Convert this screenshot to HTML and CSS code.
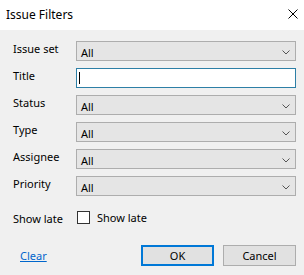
FILE: index.html
```html
<!DOCTYPE html>
<html lang="en">
  <head>
    <meta charset="UTF-8" />
    <meta name="viewport" content="width=device-width, initial-scale=1.0" />
    <title>Issue Filters</title>
    <link rel="stylesheet" href="styles.css">
  </head>
  <body>
    <div class="dialog">
      <div class="titlebar">
        <span class="caption">Issue Filters</span>
        <svg class="close" width="10" height="10" viewBox="0 0 10 10">
          <path d="M0.5 0.5 L9.5 9.5 M9.5 0.5 L0.5 9.5" stroke="#000" stroke-width="1" fill="none" />
        </svg>
      </div>
      <div class="content">
        <div class="form">
          <span class="lbl">Issue set</span>
          <div class="combo"><span>All</span><svg class="chev" width="8" height="5" viewBox="0 0 8 5"><path d="M0.5 0.5 L4 4 L7.5 0.5" stroke="#555" fill="none" /></svg></div>

          <span class="lbl">Title</span>
          <div class="textbox"><span class="caret"></span></div>

          <span class="lbl">Status</span>
          <div class="combo"><span>All</span><svg class="chev" width="8" height="5" viewBox="0 0 8 5"><path d="M0.5 0.5 L4 4 L7.5 0.5" stroke="#555" fill="none" /></svg></div>

          <span class="lbl">Type</span>
          <div class="combo"><span>All</span><svg class="chev" width="8" height="5" viewBox="0 0 8 5"><path d="M0.5 0.5 L4 4 L7.5 0.5" stroke="#555" fill="none" /></svg></div>

          <span class="lbl">Assignee</span>
          <div class="combo"><span>All</span><svg class="chev" width="8" height="5" viewBox="0 0 8 5"><path d="M0.5 0.5 L4 4 L7.5 0.5" stroke="#555" fill="none" /></svg></div>

          <span class="lbl">Priority</span>
          <div class="combo"><span>All</span><svg class="chev" width="8" height="5" viewBox="0 0 8 5"><path d="M0.5 0.5 L4 4 L7.5 0.5" stroke="#555" fill="none" /></svg></div>

          <span class="lbl late">Show late</span>
          <div class="check late"><span class="box"></span><span>Show late</span></div>
        </div>
        <div class="footer">
          <a class="clear" href="#">Clear</a>
          <div class="buttons">
            <button class="btn default">OK</button>
            <button class="btn">Cancel</button>
          </div>
        </div>
      </div>
    </div>
  </body>
</html>
```

FILE: styles.css
```css
body {
  margin: 0;
  padding: 0;
  font-family: "Noto Sans", "Open Sans", sans-serif;
  font-size: 11px;
  color: #000;
}

.dialog {
  width: 304px;
  height: 275px;
  background-color: #f0f0f0;
  display: flex;
  flex-direction: column;
}

.titlebar {
  height: 30px;
  background-color: #ffffff;
  display: flex;
  align-items: center;
  justify-content: space-between;
  padding: 0 6px 0 6px;
  box-sizing: border-box;
}

.caption {
  font-size: 12px;
  margin-top: -2px;
}

.close {
  margin-top: -2px;
}

.content {
  flex: 1;
  padding: 11px 8px 0 13px;
}

.form {
  display: grid;
  grid-template-columns: 63px 220px;
  grid-auto-rows: 20px;
  row-gap: 7px;
}

.lbl {
  line-height: 14px;
  padding-top: 1px;
}

.combo {
  background-color: #e5e5e5;
  border: 1px solid #adadad;
  box-sizing: border-box;
  display: flex;
  align-items: center;
  justify-content: space-between;
  padding: 2px 5px 0 4px;
}

.textbox {
  background-color: #ffffff;
  border: 1px solid #2d7fa6;
  box-sizing: border-box;
  display: flex;
  align-items: center;
  padding-left: 2px;
}

.caret {
  width: 1px;
  height: 12px;
  background-color: #000;
}

.late {
  margin-top: 8px;
}

.check {
  display: flex;
  align-items: center;
  gap: 7px;
  margin-left: 1px;
}

.box {
  width: 11px;
  height: 11px;
  border: 1px solid #333;
  background-color: #ffffff;
}

.footer {
  display: flex;
  justify-content: space-between;
  align-items: center;
  margin-top: 22px;
}

.clear {
  color: #0066cc;
  margin-left: 7px;
}

.buttons {
  display: flex;
  gap: 9px;
}

.btn {
  font-family: inherit;
  font-size: 11px;
  width: 73px;
  height: 21px;
  padding: 0;
  background-color: #e1e1e1;
  border: 1px solid #adadad;
  color: #000;
}

.btn.default {
  border: 2px solid #0078d7;
}
```
